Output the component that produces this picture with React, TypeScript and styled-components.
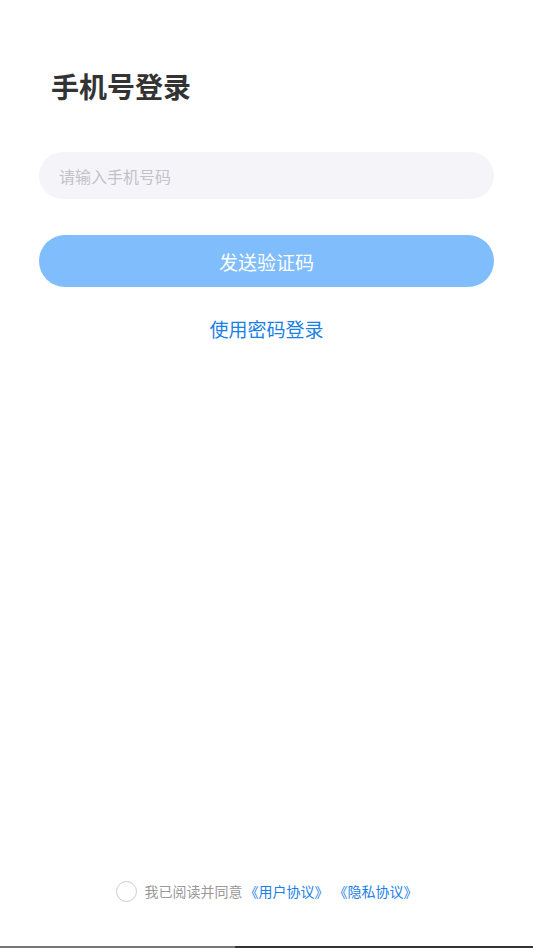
import React from "react";
import styled, {createGlobalStyle} from "styled-components";

const GlobalStyle = createGlobalStyle`
    html, body {
        margin: 0;
        padding: 0;
        background: #fff;
        font-family: "Noto Sans CJK SC", "Noto Sans", sans-serif;
    }
    #root {
        min-height: 100vh;
    }
`;

const App: React.FC = () => {
    return (
        <Page>
            <GlobalStyle/>
            <Main>
                <Title>手机号登录</Title>
                <PhoneInput placeholder="请输入手机号码"/>
                <SendButton>发送验证码</SendButton>
                <SwitchLink>使用密码登录</SwitchLink>
            </Main>
            <Agreement>
                <Radio/>
                <Note>我已阅读并同意</Note>
                <Doc>《用户协议》</Doc>
                <Doc $spaced>《隐私协议》</Doc>
            </Agreement>
            <HomeBar/>
        </Page>
    );
};

export default App;


const Page = styled.div`
    display: flex;
    flex-direction: column;
    min-height: 100vh;
    box-sizing: border-box;
`;

const Main = styled.div`
    flex: 1;
    display: flex;
    flex-direction: column;
    padding: 66px 39px 0;
`;

const Title = styled.h1`
    margin: 0 0 0 12px;
    font-size: 28px;
    line-height: 40px;
    font-weight: 700;
    color: #333;
`;

const PhoneInput = styled.input`
    margin-top: 46px;
    height: 47px;
    border: none;
    outline: none;
    border-radius: 24px;
    background: #f5f5f9;
    padding: 0 20px;
    font-family: inherit;
    font-size: 16px;
    color: #333;

    &::placeholder {
        color: #c2c2c8;
    }
`;

const SendButton = styled.button`
    margin-top: 36px;
    height: 52px;
    border: none;
    border-radius: 26px;
    background: #80bdfc;
    color: #fff;
    font-family: inherit;
    font-size: 19px;
    cursor: pointer;
`;

const SwitchLink = styled.div`
    margin-top: 28px;
    text-align: center;
    font-size: 19px;
    line-height: 28px;
    color: #1a80e6;
`;

const Agreement = styled.div`
    display: flex;
    align-items: center;
    justify-content: center;
    height: 24px;
    margin-bottom: 43px;
    font-size: 14px;
    color: #999;
`;

const Radio = styled.div`
    width: 19px;
    height: 19px;
    border-radius: 50%;
    border: 1px solid #ccc;
`;

const Note = styled.span`
    margin-left: 8px;
`;

const Doc = styled.span<{$spaced?: boolean}>`
    color: #1a80e6;
    margin-left: ${p => p.$spaced ? 5 : 2}px;
`;

const HomeBar = styled.div`
    height: 2px;
    background: linear-gradient(to right, #777 0%, #777 44%, #333 44%, #333 100%);
`;
